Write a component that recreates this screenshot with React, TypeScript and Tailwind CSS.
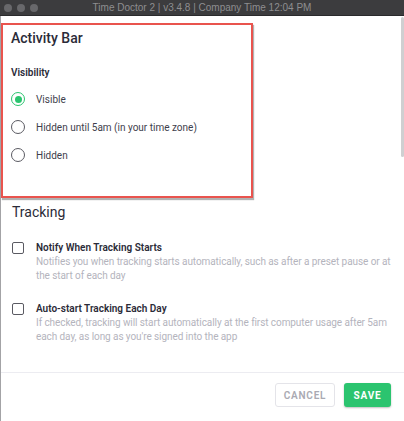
import { Fragment } from "react";

const radios = [
  { label: "Visible", checked: true },
  { label: "Hidden until 5am (in your time zone)", checked: false },
  { label: "Hidden", checked: false },
];

const toggles = [
  {
    title: "Notify When Tracking Starts",
    desc: "Notifies you when tracking starts automatically, such as after a preset pause or at the start of each day",
  },
  {
    title: "Auto-start Tracking Each Day",
    desc: "If checked, tracking will start automatically at the first computer usage after 5am each day, as long as you're signed into the app",
  },
];

function Radio({ checked }: { checked: boolean }) {
  if (checked) {
    return (
      <span className="w-[14px] h-[14px] rounded-full border-[1.5px] border-[#2bc46f] flex items-center justify-center shrink-0">
        <span className="w-[7px] h-[7px] rounded-full bg-[#2bc46f]" />
      </span>
    );
  }
  return <span className="w-[14px] h-[14px] rounded-full border-[1.5px] border-[#5a5a62] shrink-0" />;
}

export default function App() {
  return (
    <div className="w-[404px] h-[421px] bg-white flex flex-col overflow-hidden relative font-['Roboto',sans-serif]">
      {/* Window title bar */}
      <div className="h-[16px] bg-[#3c3c3e] border-b border-[#2a2a2c] flex items-center relative shrink-0">
        <div className="flex items-center gap-[5px] pl-[4px]">
          <span className="w-[8px] h-[8px] rounded-full bg-[#68686b]" />
          <span className="w-[8px] h-[8px] rounded-full bg-[#68686b]" />
          <span className="w-[8px] h-[8px] rounded-full bg-[#68686b]" />
        </div>
        <div className="absolute inset-0 flex items-center justify-center text-[10px] leading-none text-[#8e8e90] font-['Liberation_Sans',sans-serif]">
          Time Doctor 2 | v3.4.8 | Company Time 12:04 PM
        </div>
      </div>

      <div className="flex-1 flex flex-col border-l border-[#a3a3a6] min-h-0">
        <div className="flex-1 flex flex-col">
          {/* Activity bar section (highlighted) */}
          <div className="mt-[7px] w-[252px] border-2 border-[#e9544e] shadow-[1px_2px_1px_rgba(0,0,0,0.3)] pt-[3px] pb-[31px] pl-[8px]">
            <div className="text-[14px] leading-[20px] font-medium text-[#2b2b38]">Activity Bar</div>
            <div className="mt-[18px] text-[10px] leading-[14px] font-semibold text-[#2b2b38]">Visibility</div>
            <div className="mt-[9px] flex flex-col gap-[8px]">
              {radios.map((r) => (
                <div key={r.label} className="h-[20px] flex items-center">
                  <Radio checked={r.checked} />
                  <span className="ml-[11px] text-[10px] text-[#3e3e4c]">{r.label}</span>
                </div>
              ))}
            </div>
          </div>

          {/* Tracking section */}
          <div className="pl-[11px] pr-[6px]">
            <div className="mt-[4px] text-[14px] leading-[20px] text-[#2b2b38]">Tracking</div>
            {toggles.map((t) => (
              <Fragment key={t.title}>
                <div className="mt-[19px] flex">
                  <div className="h-[14px] flex items-center shrink-0">
                    <span className="w-[12px] h-[12px] rounded-[2px] border-[1.5px] border-[#5a5a62]" />
                  </div>
                  <div className="ml-[12px]">
                    <div className="text-[10px] leading-[14px] font-semibold text-[#2b2b38]">{t.title}</div>
                    <div className="text-[10px] leading-[14px] tracking-[-0.08px] text-[#b4b4bd]">{t.desc}</div>
                  </div>
                </div>
              </Fragment>
            ))}
          </div>
        </div>

        {/* Footer */}
        <div className="border-t border-[#ececf1] pt-[10px] pb-[14px] pr-[13px] flex justify-end gap-[9px] shrink-0">
          <button className="w-[60px] h-[24px] rounded-[3px] border border-[#e4e4e9] bg-white text-[10px] font-semibold tracking-[0.08em] text-[#a9a9b2]">
            CANCEL
          </button>
          <button className="w-[47px] h-[24px] rounded-[3px] bg-[#2bc46f] shadow-[0_1px_2px_rgba(0,0,0,0.25)] text-[10px] font-bold tracking-[0.08em] text-white">
            SAVE
          </button>
        </div>
      </div>

      {/* Scrollbar thumb */}
      <div className="absolute right-0 top-[17px] w-[3px] h-[140px] rounded-full bg-[#cfcfd1]" />
    </div>
  );
}
